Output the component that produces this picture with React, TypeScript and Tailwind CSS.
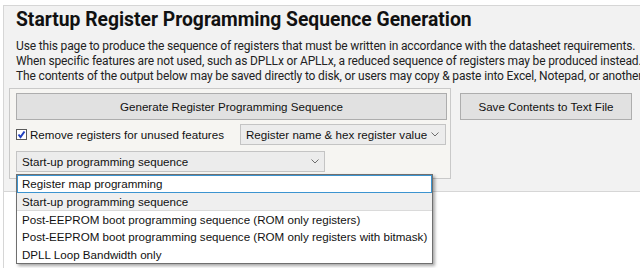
import { useState } from 'react';

const options = [
  'Register map programming',
  'Start-up programming sequence',
  'Post-EEPROM boot programming sequence (ROM only registers)',
  'Post-EEPROM boot programming sequence (ROM only registers with bitmask)',
  'DPLL Loop Bandwidth only',
];

function Chevron() {
  return (
    <svg width="8" height="5" viewBox="0 0 8 5" className="shrink-0">
      <polyline points="0.5,0.5 4,4 7.5,0.5" fill="none" stroke="#6d6d6d" strokeWidth="1" />
    </svg>
  );
}

function CheckBox({ checked }: { checked: boolean }) {
  return (
    <svg width="11" height="11" viewBox="0 0 11 11" className="shrink-0">
      <rect x="0.5" y="0.5" width="10" height="10" fill="#ffffff" stroke="#5a5a5a" />
      {checked && (
        <polyline points="2.5,5.5 4.5,8 8.5,2.5" fill="none" stroke="#1f3fbf" strokeWidth="2" />
      )}
    </svg>
  );
}

export default function App() {
  const [removeUnused, setRemoveUnused] = useState(true);
  const [selected] = useState(1);

  return (
    <div className="relative w-[640px] h-[268px] overflow-hidden bg-white pt-[5px] pl-[3px] whitespace-nowrap font-['Liberation_Sans',Arial,sans-serif] text-[#111]">
      <div className="h-full border-l border-t border-[#d6d6d6]">
        <div className="bg-[#f2f2f2] border-b border-[#d6d6d6] h-[186px]">
          <h1 className="pl-[12px] pt-[2px] text-[19.3px] leading-[24px] font-bold text-[#111] font-['Roboto',sans-serif]">
            Startup Register Programming Sequence Generation
          </h1>
          <p className="mt-[7px] pl-[12px] text-[12px] tracking-[-0.15px] leading-[15px] text-[#222] font-['Roboto',sans-serif]">
            Use this page to produce the sequence of registers that must be written in accordance with the datasheet requirements.
            <br />
            When specific features are not used, such as DPLLx or APLLx, a reduced sequence of registers may be produced instead.
            <br />
            The contents of the output below may be saved directly to disk, or users may copy &amp; paste into Excel, Notepad, or another application.
          </p>

          <div className="mt-[4px] flex items-start">
            <div className="shrink-0 ml-[5px] w-[442px] h-[91px] border border-[#c9c9c9] bg-[#f6f5f2] pl-[6px] pt-[4px]">
              <button className="w-[431px] h-[27px] bg-[#e1e1e1] border border-[#adadad] text-[11.6px] text-[#111]">
                Generate Register Programming Sequence
              </button>

              <div className="mt-[4px] flex items-center h-[21px]">
                <button className="shrink-0 w-[224px] flex items-center gap-[3px]" onClick={() => setRemoveUnused(!removeUnused)}>
                  <CheckBox checked={removeUnused} />
                  <span className="text-[11.6px]">Remove registers for unused features</span>
                </button>
                <div className="shrink-0 w-[206px] h-[21px] bg-[#ececec] border border-[#c4c4c4] flex items-center justify-between pl-[5px] pr-[6px]">
                  <span className="text-[11.6px]">Register name &amp; hex register value</span>
                  <Chevron />
                </div>
              </div>

              <div className="mt-[6px] w-[309px] h-[21px] bg-[#ececec] border border-[#c4c4c4] flex items-center justify-between pl-[5px] pr-[5px]">
                <span className="text-[11.6px]">{options[selected]}</span>
                <Chevron />
              </div>
            </div>

            <button className="shrink-0 ml-[9px] w-[172px] h-[27px] mt-[5px] bg-[#e1e1e1] border border-[#adadad] text-[11.6px] text-[#111]">
              Save Contents to Text File
            </button>
          </div>
        </div>
      </div>

      <ul className="absolute left-[16px] top-[174px] w-[417px] bg-white border border-[#6f6f6f] shadow-[2px_2px_3px_rgba(0,0,0,0.35)] text-[11.6px]">
        {options.map((opt, i) => (
          <li
            key={opt}
            className={
              i === 0
                ? 'h-[18px] flex items-center pl-[4px] border border-[#3c94d0] bg-white'
                : i === selected
                ? 'h-[17.5px] flex items-center pl-[5px] bg-[#efefef] border-b border-[#dadada]'
                : 'h-[17.5px] flex items-center pl-[5px]'
            }
          >
            {opt}
          </li>
        ))}
      </ul>
    </div>
  );
}
